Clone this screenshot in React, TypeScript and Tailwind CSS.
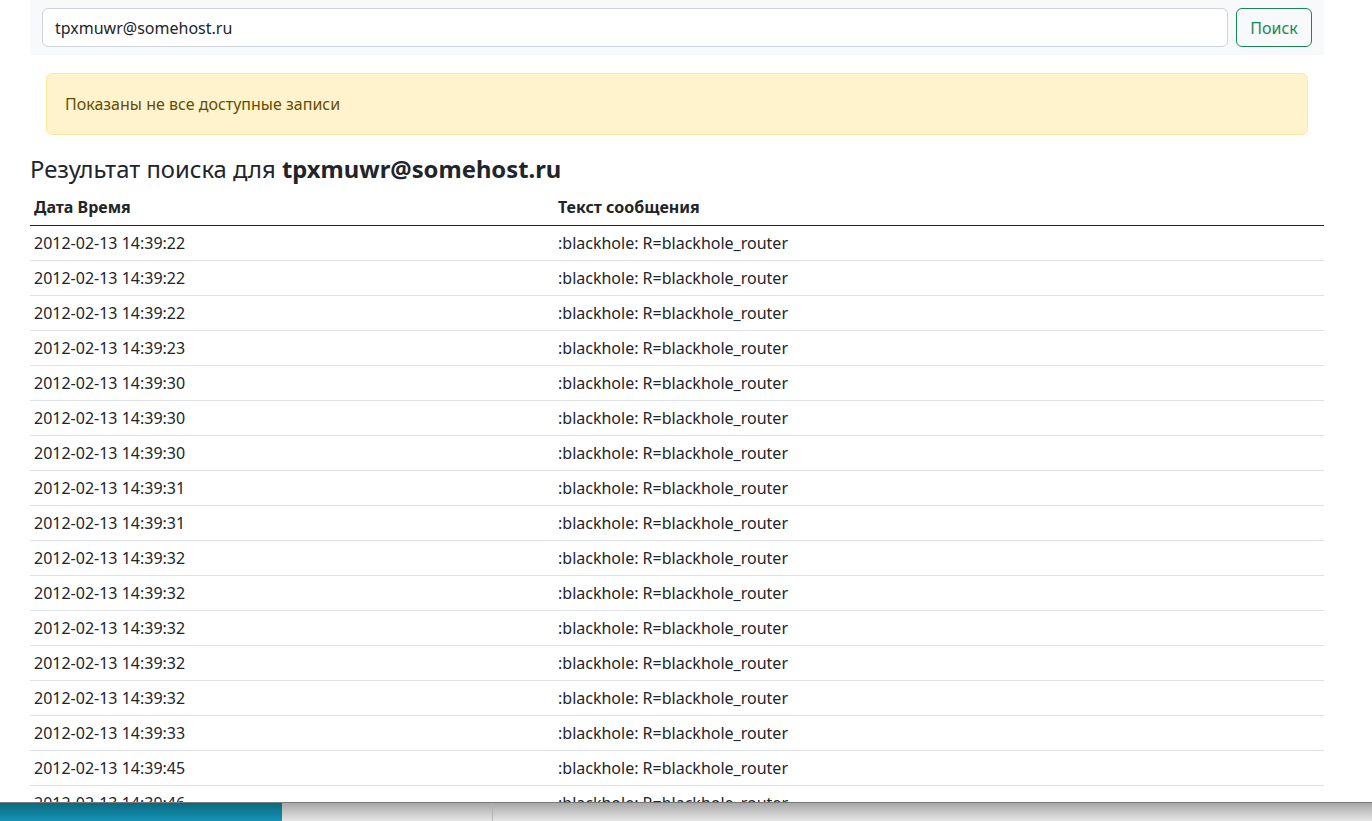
import React from "react";

const times = [
  "14:39:22",
  "14:39:22",
  "14:39:22",
  "14:39:23",
  "14:39:30",
  "14:39:30",
  "14:39:30",
  "14:39:31",
  "14:39:31",
  "14:39:32",
  "14:39:32",
  "14:39:32",
  "14:39:32",
  "14:39:32",
  "14:39:33",
  "14:39:45",
  "14:39:46",
  "14:39:46",
];

export default function App() {
  return (
    <div className="relative h-[821px] overflow-hidden bg-white text-[#212529] font-['Noto_Sans',sans-serif]">
      <div className="mx-[30px] w-[1294px]">
        <div className="flex h-[55px] gap-2 bg-[#f8f9fa] px-3 pt-2">
          <input
            readOnly
            value="tpxmuwr@somehost.ru"
            className="h-[39px] flex-1 rounded-md border border-[#ced4da] bg-white px-3 text-base text-[#212529] outline-none"
          />
          <button
            type="button"
            className="h-[39px] w-[76px] rounded-md border border-[#198754] text-base text-[#198754]"
          >
            Поиск
          </button>
        </div>

        <div className="mx-4 mt-[18px] flex h-[62px] items-center rounded-md border border-[#ffe69c] bg-[#fff3cd] px-[18px] text-base text-[#664d03]">
          Показаны не все доступные записи
        </div>

        <h2 className="mt-[18px] text-[23.8px] leading-[32px]">
          Результат поиска для <b className="font-bold">tpxmuwr@somehost.ru</b>
        </h2>

        <table className="mt-[5px] w-full border-collapse text-base">
          <thead>
            <tr className="h-[35px] border-b border-[#212529]">
              <th className="w-[524px] px-1 text-left font-bold">Дата Время</th>
              <th className="px-1 text-left font-bold">Текст сообщения</th>
            </tr>
          </thead>
          <tbody>
            {times.map((t, i) => (
              <tr key={i} className="h-[35px] border-b border-[#dee2e6]">
                <td className="px-1">2012-02-13 {t}</td>
                <td className="px-1">:blackhole: R=blackhole_router</td>
              </tr>
            ))}
          </tbody>
        </table>
      </div>

      {/* taskbar strip over the bottom of the page */}
      <div className="absolute bottom-0 left-0 flex h-[19px] w-full border-t border-[#7a7a7a]">
        <div className="w-[282px] bg-gradient-to-b from-[#0b6a80] to-[#1593b5]" />
        <div className="w-[211px] border-r border-[#b5b5b5] bg-gradient-to-b from-[#a8a8a8] to-[#e6e6e6]" />
        <div className="flex-1 bg-gradient-to-b from-[#a8a8a8] to-[#e6e6e6]" />
      </div>
    </div>
  );
}
